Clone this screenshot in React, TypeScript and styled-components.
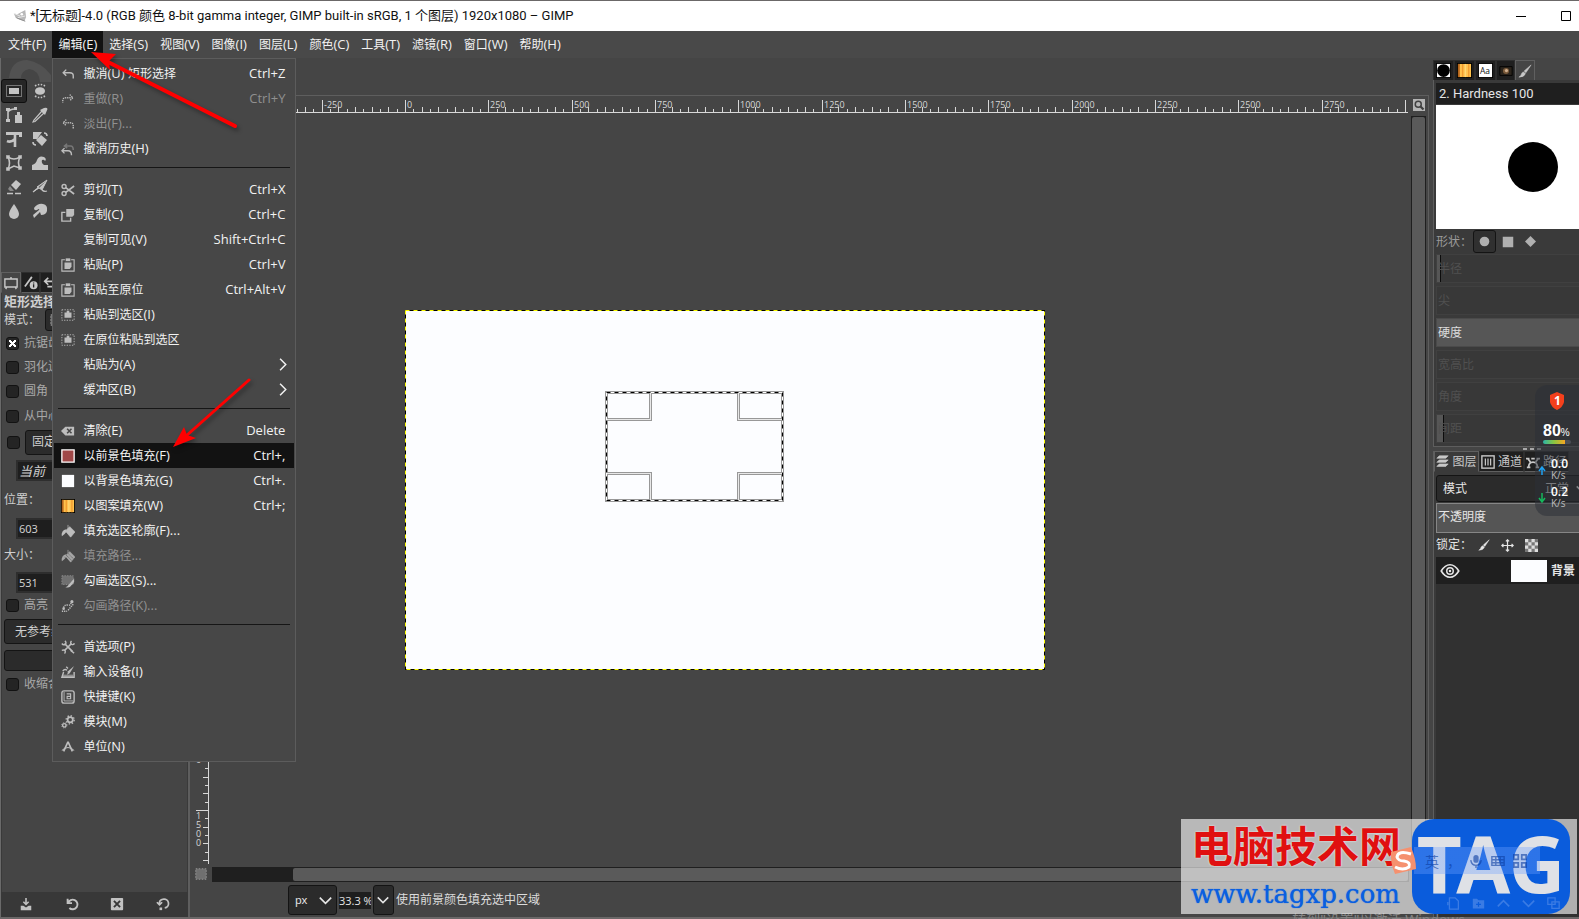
import React from 'react';
import styled, { createGlobalStyle, css } from 'styled-components';

const UI = '"Noto Sans", "Noto Sans CJK SC", sans-serif';

const Global = createGlobalStyle`
  *, *::before, *::after { box-sizing: border-box; }
  body { margin: 0; background: #454545; overflow: hidden; }
  button, input, select { font: inherit; color: inherit; margin: 0; }
  button { cursor: pointer; }
  svg { display: block; flex: none; }
`;

const Shell = styled.div`
  position: relative;
  display: flex;
  flex-direction: column;
  min-height: 100vh;
  overflow: hidden;
  background: #454545;
  color: #e6e6e6;
  font: 12px/16px ${UI};
`;

/* ---------- title and menu bars ---------- */

const TitleBar = styled.header`
  display: flex;
  align-items: center;
  gap: 3px;
  height: 31px;
  padding: 0 0 0 13px;
  border-top: 1px solid #6b6868;
  background: #fff;
  color: #111;
`;
const TitleText = styled.h1`
  flex: 1;
  margin: 0;
  font: 400 13px/16px Roboto, "Noto Sans CJK SC", sans-serif;
  white-space: nowrap;
`;
const WindowButton = styled.button`
  display: grid;
  place-items: center;
  width: 45px;
  height: 29px;
  padding: 0;
  border: 0;
  background: none;
`;
const WindowButtons = styled.div`
  display: flex;
  margin-right: -9px;
`;

const MenuBar = styled.nav`
  display: flex;
  height: 27px;
  padding-left: 2px;
  background: #494949;
`;
const MenuSlot = styled.div`
  position: relative;
`;
const MenuTitle = styled.button<{ $open?: boolean }>`
  height: 27px;
  padding: 0 6px;
  border: 0;
  background: ${(p) => (p.$open ? '#121212' : 'transparent')};
  color: #f2f2f2;
  white-space: nowrap;
`;
const LatinRun = styled.span`
  font-family: "Open Sans", sans-serif;
  font-size: 13px;
`;

const Popup = styled.div`
  position: absolute;
  z-index: 5;
  top: 27px;
  left: 0;
  width: 244px;
  padding: 2px 1px;
  border: 1px solid #5c5c5c;
  background: #474747;
`;
const Row = styled.button<{ $active?: boolean; $off?: boolean }>`
  display: grid;
  grid-template-columns: 14px 1fr auto;
  gap: 8px;
  align-items: center;
  width: 100%;
  height: 25px;
  padding: 0 9px 0 7px;
  border: 0;
  background: ${(p) => (p.$active ? '#121212' : 'transparent')};
  color: ${(p) => (p.$off ? '#909090' : '#f2f2f2')};
  text-align: left;
  white-space: nowrap;
`;
const Shortcut = styled.span`
  padding-bottom: 2px;
  font-family: "Open Sans", sans-serif;
  font-size: 13px;
`;
const SubmenuMark = styled.span`
  margin-right: -4px;
`;
const Separator = styled.hr`
  height: 1px;
  margin: 6px 4px 9px;
  border: 0;
  background: #161616;
`;

/* ---------- main area ---------- */

const Main = styled.main`
  flex: 1;
  display: grid;
  grid-template-columns: 190px minmax(0, 1fr) 148px;
  column-gap: 2px;
  border-bottom: 2px solid #6b6868;
`;
const LeftDock = styled.aside`
  display: flex;
  flex-direction: column;
  min-width: 0;
  border-left: 1px solid #6a6a6a;
  border-right: 2px solid #5e5e5e;
  overflow: hidden;
`;
const Toolbox = styled.div`
  position: relative;
  height: 214px;
  padding-top: 21px;
`;
const Mascot = styled.svg`
  position: absolute;
  top: 0;
  left: 6px;
`;
const ToolGrid = styled.div`
  position: relative;
  display: grid;
  grid-template-columns: repeat(2, 26px);
  grid-auto-rows: 24px;
`;
const Tool = styled.button<{ $on?: boolean }>`
  display: grid;
  place-items: center;
  padding: 0;
  border: 1px solid ${(p) => (p.$on ? '#0f0f0f' : 'transparent')};
  border-radius: 3px;
  background: ${(p) => (p.$on ? '#262626' : 'transparent')};
  color: #c4c4c4;
`;
const TabStrip = styled.div`
  display: flex;
  height: 21px;
`;
const DockTab = styled.button<{ $on?: boolean; $w: number }>`
  display: flex;
  align-items: center;
  justify-content: center;
  gap: 3px;
  flex: none;
  width: ${(p) => p.$w}px;
  padding: 0;
  border: 1px solid ${(p) => (p.$on ? '#606060' : '#2e2e2e')};
  border-bottom-color: ${(p) => (p.$on ? 'transparent' : '#606060')};
  background: ${(p) => (p.$on ? 'transparent' : '#1f1f1f')};
  color: #c8c8c8;
  white-space: nowrap;
`;
const Options = styled.section`
  flex: 1;
  padding-left: 2px;
  border-left: 1px solid #3a3a3a;
  border-right: 1px solid #3a3a3a;
  color: #cfcfcf;
`;
const OptionsTitle = styled.h2`
  margin: 0;
  font-size: 13px;
  line-height: 16px;
`;
const OptionRow = styled.div<{ $h: number; $pad?: number }>`
  display: flex;
  align-items: center;
  gap: 5px;
  height: ${(p) => p.$h}px;
  padding-left: ${(p) => p.$pad ?? 0}px;
  white-space: nowrap;
`;
const CheckLabel = styled.label`
  display: flex;
  align-items: center;
  gap: 5px;
  color: #a8a8a8;
`;
const Check = styled.input`
  appearance: none;
  position: relative;
  flex: none;
  width: 13px;
  height: 13px;
  border: 1px solid #121212;
  border-radius: 3px;
  background: #242424;
  &:checked::after {
    content: '';
    position: absolute;
    inset: 2px;
    background:
      linear-gradient(45deg, transparent 40%, #fff 40%, #fff 60%, transparent 60%),
      linear-gradient(-45deg, transparent 40%, #fff 40%, #fff 60%, transparent 60%);
  }
`;
const fieldLook = css`
  border: 1px solid #141414;
  border-radius: 3px;
  background: #2b2b2b;
`;
const WideButton = styled.button<{ $h: number; $pad?: number }>`
  ${fieldLook}
  flex: 1;
  height: ${(p) => p.$h}px;
  margin-right: 4px;
  padding: 0 ${(p) => p.$pad ?? 10}px;
  text-align: left;
`;
const Field = styled.input<{ $slanted?: boolean }>`
  flex: 1;
  min-width: 0;
  height: 21px;
  padding: 0 1px;
  border: 2px solid #2e2e2e;
  background: #1e1e1e;
  font-size: ${(p) => (p.$slanted ? 13 : 11)}px;
  font-style: ${(p) => (p.$slanted ? 'italic' : 'normal')};
`;
const DockFooter = styled.div`
  display: flex;
  justify-content: space-between;
  align-items: center;
  height: 25px;
  padding: 0 18px 2px;
  background: #383838;
`;
const IconButton = styled.button`
  display: grid;
  place-items: center;
  padding: 0;
  border: 0;
  background: none;
  color: #c2c2c2;
`;

/* ---------- image window ---------- */

const ImageWindow = styled.section`
  display: grid;
  grid-template-columns: 18px minmax(0, 1fr) 20px;
  grid-template-rows: 37px 18px minmax(0, 1fr) 18px 34px;
`;
const Blank = styled.div`
  grid-column: 1 / -1;
`;
const Cell = styled.div<{ $top?: boolean; $right?: boolean }>`
  position: relative;
  overflow: hidden;
  display: grid;
  place-items: center;
  border-top: ${(p) => (p.$top ? '1px solid #5e5e5e' : '0')};
  border-right: ${(p) => (p.$right ? '1px solid #5e5e5e' : '0')};
`;
const RulerArt = styled.svg`
  position: absolute;
  inset: 0;
  width: 100%;
  height: 100%;
  font: 9px "Open Sans", sans-serif;
  fill: #d8d8d8;
`;
const Picture = styled.svg`
  position: absolute;
  left: 195px;
  top: 197px;
`;
const ScrollTrack = styled.div<{ $vertical?: boolean }>`
  display: flex;
  justify-self: ${(p) => (p.$vertical ? 'center' : 'stretch')};
  align-self: stretch;
  width: ${(p) => (p.$vertical ? '15px' : 'auto')};
  padding: ${(p) => (p.$vertical ? '0' : '0 0 0 80px')};
  margin: ${(p) => (p.$vertical ? '3px 0 0' : '2px 0 1px 2px')};
  background: #1f1f1f;
`;
const ScrollThumb = styled.div`
  flex: 1;
  margin: 1px;
  border-radius: 2px;
  background: #5a5a5a;
`;
const StatusBar = styled.footer`
  grid-column: 1 / -1;
  display: flex;
  align-items: center;
  gap: 2px;
  padding-left: 96px;
`;
const UnitBox = styled.label<{ $w: number }>`
  position: relative;
  display: flex;
  align-items: center;
  width: ${(p) => p.$w}px;
  height: 30px;
  ${fieldLook}
  svg { position: absolute; right: 4px; pointer-events: none; }
`;
const UnitSelect = styled.select`
  appearance: none;
  width: 100%;
  height: 100%;
  padding: 0 6px;
  border: 0;
  background: none;
  font-size: 11px;
`;
const ZoomField = styled.input`
  width: 32px;
  height: 17px;
  padding: 0;
  border: 0;
  background: #1e1e1e;
  font-family: "Open Sans", sans-serif;
  font-size: 11px;
`;
const StatusText = styled.span`
  color: #dcdcdc;
`;

/* ---------- right dock ---------- */

const RightDock = styled.aside`
  display: flex;
  flex-direction: column;
  min-width: 0;
  overflow: hidden;
  padding-left: 2px;
`;
const BrushPanel = styled.section`
  margin-top: -1px;
  padding: 3px 0 0 2px;
  border-left: 1px solid #5e5e5e;
  border-bottom: 1px solid #5e5e5e;
  background: #3a3a3a;
`;
const BrushTabs = styled(TabStrip)`
  margin-top: 2px;
`;
const BrushName = styled.input`
  width: 100%;
  height: 21px;
  padding: 0 3px;
  border: 0;
  background: #1f1f1f;
  display: block;
  font: 13px Roboto, sans-serif;
`;
const BrushPreview = styled.div`
  display: flex;
  justify-content: flex-end;
  align-items: center;
  height: 124px;
  margin-top: 1px;
  padding-right: 21px;
  background: #fff;
`;
const BrushDot = styled.div`
  width: 50px;
  height: 50px;
  border-radius: 50%;
  background: #000;
`;
const ShapeRow = styled.div`
  display: flex;
  align-items: center;
  height: 25px;
  color: #9a9a9a;
`;
const ShapeLabel = styled.span`
  width: 37px;
  white-space: nowrap;
`;
const ShapeButton = styled.button<{ $on?: boolean }>`
  display: grid;
  place-items: center;
  width: 23px;
  height: 23px;
  padding: 0;
  border: 1px solid ${(p) => (p.$on ? '#141414' : 'transparent')};
  border-radius: 3px;
  background: ${(p) => (p.$on ? '#303030' : 'transparent')};
  color: #b0b0b0;
`;
const Slider = styled.div<{ $lit?: boolean; $fill?: number }>`
  display: flex;
  align-items: center;
  height: 29px;
  margin-bottom: 3px;
  padding-left: 1px;
  border: 1px solid ${(p) => (p.$lit ? '#4a4a4a' : '#404040')};
  border-right: 0;
  background: ${(p) => (p.$lit ? '#565656' : '#383838')};
  ${(p) =>
    p.$fill &&
    css`
      background: linear-gradient(90deg, #565656 0 ${p.$fill}px, #0c0c0c ${p.$fill}px ${p.$fill! + 1}px, #383838 ${p.$fill! + 1}px);
    `}
  color: ${(p) => (p.$lit ? '#dcdcdc' : '#505050')};
`;
const Grip = styled.div`
  display: flex;
  justify-content: center;
  gap: 3px;
  height: 4px;
  padding: 1px 0 0 52px;
  i { width: 4px; height: 2px; background: #a8a8a8; }
`;
const LayersPanel = styled.section`
  flex: 1;
  display: flex;
  flex-direction: column;
  border-left: 1px solid #5e5e5e;
  background: #3a3a3a;
`;
const ModeBox = styled.label`
  ${fieldLook}
  display: flex;
  align-items: center;
  height: 27px;
  margin: 3px -10px 1px 2px;
  padding: 0 0 0 6px;
  svg { margin-left: 5px; }
`;
const ModeSelect = styled.select`
  appearance: none;
  width: 26px;
  margin-left: auto;
  padding: 0;
  border: 0;
  background: none;
  color: #c8c8c8;
`;
const Opacity = styled.div`
  height: 30px;
  margin: 0 -2px 0 2px;
  padding: 5px 1px 4px;
  border: 1px solid #868686;
  background: #555;
`;
const LockRow = styled.div`
  display: flex;
  align-items: center;
  gap: 11px;
  height: 24px;
  padding-left: 2px;
`;
const LockLabel = styled.span`
  width: 31px;
  white-space: nowrap;
`;
const LayerList = styled.div`
  flex: 1;
  margin-left: 2px;
  background: #313131;
`;
const LayerRow = styled.div`
  display: flex;
  align-items: center;
  height: 27px;
  padding-left: 4px;
  background: #1f1f1f;
  font-weight: 700;
  white-space: nowrap;
`;
const LayerThumb = styled.div`
  width: 36px;
  height: 22px;
  margin: 0 4px 0 51px;
  background: #fcfdff;
`;

/* ---------- overlays ---------- */

const Arrows = styled.svg`
  position: absolute;
  z-index: 6;
  left: 0;
  top: 0;
  pointer-events: none;
  filter: drop-shadow(2px 3px 2px rgba(0, 0, 0, 0.35));
`;
const Monitor = styled.div`
  position: absolute;
  z-index: 4;
  right: 0;
  top: 385px;
  width: 44px;
  height: 131px;
  padding-top: 7px;
  border-radius: 12px 0 0 12px;
  background: rgba(44, 48, 56, 0.52);
  color: #fff;
`;
const Percent = styled.div`
  display: flex;
  align-items: baseline;
  margin: 14px 0 0 8px;
  font: 700 16px/14px "Liberation Sans", sans-serif;
  small { font-size: 10px; font-weight: 400; }
`;
const Meter = styled.div`
  width: 28px;
  height: 4px;
  margin: 0 0 0 8px;
  border-radius: 2px;
  background: linear-gradient(90deg, #2bb5a8, #8cc63f 40%, #f5a623 78%, #4c4f57 78%);
`;
const RateGroup = styled.div`
  padding-top: 14px;
`;
const Rate = styled.div`
  display: flex;
  gap: 5px;
  height: 28px;
  margin-left: 3px;
`;
const RateText = styled.div`
  font: 600 12px/12px "Open Sans", sans-serif;
  small {
    display: block;
    font-size: 10px;
    font-weight: 400;
    line-height: 10px;
    color: #bcbcbc;
  }
`;

const ActivateNote = styled.div`
  position: absolute;
  right: 100px;
  bottom: -10px;
  z-index: 7;
  color: #858585;
  font-size: 14px;
  line-height: 19px;
  white-space: nowrap;
`;
const Watermark = styled.div`
  position: absolute;
  z-index: 8;
  right: 2px;
  bottom: 5px;
  display: flex;
  width: 396px;
  height: 95px;
  padding-right: 7px;
  background: rgba(255, 255, 255, 0.62);
`;
const SiteWords = styled.div`
  flex: 1;
  padding-left: 10px;
  white-space: nowrap;
`;
const SiteName = styled.div`
  height: 58px;
  color: #e01010;
  font: 700 42px/50px "Noto Sans CJK SC", sans-serif;
  text-shadow: 0 0 2px #fff;
`;
const SiteUrl = styled.div`
  color: #0a5fe0;
  font: 26px/34px "DejaVu Serif", serif;
  text-shadow: 0 0 1px #0a5fe0;
`;
const Badge = styled.div`
  position: relative;
  width: 158px;
  height: 95px;
  border-radius: 22px;
  background: #0a5cdc;
  color: #dfe1e6;
  font: 700 78px/88px "Noto Sans", sans-serif;
  text-align: center;
`;
const GhostIcons = styled.div`
  position: absolute;
  right: 10px;
  bottom: 4px;
  display: flex;
  gap: 12px;
  color: rgba(130, 170, 240, 0.4);
`;
const ImeBar = styled.div`
  position: absolute;
  right: 37px;
  top: 28px;
  display: flex;
  align-items: center;
  gap: 8px;
  width: 150px;
  height: 27px;
  color: rgba(10, 60, 160, 0.6);
  font: 14px/20px "Noto Sans CJK SC", sans-serif;
  background: linear-gradient(90deg, transparent 24px, rgba(110, 160, 255, 0.35) 24px);
`;

/* ---------- icons (16 unit grid) ---------- */

const L = { fill: 'none', stroke: 'currentColor', strokeWidth: 1.6 } as const;
const undoPath = <path d="M6 3 L2.5 6.5 L6 10 M2.5 6.5 H10 Q14 6.5 14 10 V13" {...L} />;
const bucket = <><path d="M5 8 L10 3 L16 9 L11 15 Z M8 1 V7" fill="currentColor" stroke="currentColor" strokeWidth=".8" /><path d="M6 6 Q0 7 1 14 Q4 12 6 9Z" fill="currentColor" /></>;
const brush = <path d="M15 1 L7 8 L9 10 Z M6.5 9 L8.5 11 Q7 15 1 15 Q4 13 4 11 Q5 9 6.5 9Z" fill="currentColor" stroke="currentColor" strokeWidth=".6" />;
const paste = <><path d="M1 2 H15 V15 H1Z" fill="none" stroke="currentColor" strokeWidth="1.3" /><path d="M5 0 H11 V4 H5Z" fill="currentColor" stroke="#474747" strokeWidth=".8" /><path d="M4 5 H12 V10 L10 12.500 H4Z" fill="currentColor" /></>;
const pasteSel = <><path d="M1 2 H15 V14 H1Z" fill="none" stroke="currentColor" strokeDasharray="1.500 1.500" /><path d="M4 5 H6.500 V3 H9.500 V5 H12 V11 H4Z" fill="currentColor" /></>;
const wood = (
  <>
    <path d="M0 0H16V16H0Z" fill="#000" /><path d="M1 1H15V15H1Z" fill="#ffc24d" />
    <path d="M2 1V15" stroke="#b5651d" strokeWidth="2" /><path d="M6 1V15M12.500 1V15" stroke="#f09a30" strokeWidth="1.500" /><path d="M9 1V15" stroke="#ffd777" strokeWidth="1.500" />
  </>
);
const reset = <path d="M3 2 V7 H8 M3.500 7 A5.500 5.500 0 1 1 5 12.500" fill="none" stroke="currentColor" strokeWidth="2.200" />;

const icons: Record<string, React.ReactNode> = {
  undo: undoPath,
  redo: <g strokeDasharray="1.5 1"><path d="M10 3 L13.500 6.500 L10 10 M13.500 6.500 H6 Q2 6.500 2 10 V12" {...L} /></g>,
  fade: <g strokeDasharray="1.5 1">{undoPath}</g>,
  history: <><path d="M7 2 L4 4.500 L7 7 M4 4.500 H11 Q14 4.500 14 9" fill="none" stroke="#777" strokeWidth="1.800" /><path d="M4 7 L1 10 L4 13 M1 10 H8 Q12 10 12 15" {...L} /></>,
  cut: <><circle cx="3.500" cy="4" r="2.300" {...L} /><circle cx="3.500" cy="12" r="2.300" {...L} /><path d="M5 5 L15 12.500 M5 11 L15 3.500" {...L} strokeWidth="2" /></>,
  copy: <><path d="M6 1 H15 V8 L13 10 H6Z" fill="currentColor" /><path d="M5 5 H1 V15 H11 V11" {...L} /></>,
  paste, pasteSel,
  clear: <><path d="M5 3 H15 V13 H5 L0 8Z" fill="currentColor" /><path d="M7 5.500 L12 10.500 M12 5.500 L7 10.500" stroke="#474747" strokeWidth="1.800" /></>,
  fg: <path d="M1 1H15V15H1Z" fill="#a04848" stroke="#fff" strokeWidth="1.500" />,
  bg: <path d="M1 1H15V15H1Z" fill="#fcfdff" />,
  wood,
  fill: bucket,
  fillPath: <g opacity=".8">{bucket}<path d="M6 7l6 6M8 5l6 6M4 9l6 6" stroke="#474747" strokeDasharray="1 1" /></g>,
  strokeSel: <><path d="M1 2H14V12H1Z" fill="#707070" stroke="#8e8e8e" strokeDasharray="1.500 1.500" /><path d="M15 5 L9 12 L11 14 L15 9Z M9 12 Q7 15 5 15 Q10 16 11 14" fill="currentColor" /></>,
  strokePath: <><path d="M3 10 Q4 6 8 7 Q11 8 12 3" {...L} strokeDasharray="1.500 1" /><circle cx="3" cy="11" r="1.500" fill="currentColor" /><circle cx="12.500" cy="3" r="1.800" fill="currentColor" /><path d="M14 6 L8 13 M1 14 H7" {...L} strokeDasharray="1.500 1" /></>,
  prefs: <><path d="M4 4 L13 13 M12 4 L4 12" {...L} strokeWidth="2" /><path d="M1 4 A3 3 0 0 0 5 5 A3 3 0 0 0 4.500 1 M12 1 A3 3 0 0 0 12 5 A3 3 0 0 0 15.500 4 M1 12 A3 3 0 0 1 4.500 12 A3 3 0 0 1 4 15.500 M11 12 L15 15" {...L} /></>,
  input: <><path d="M3 8 L1 14 H15 V8" {...L} /><path d="M2 11H14V14H2Z" fill="currentColor" opacity=".6" /><path d="M15 1 L8 7 L7 11 L10 9.500Z" fill="currentColor" /><path d="M2 7 Q4 4 7 6 M6 2l2 2" {...L} /></>,
  keys: <><rect x="1" y="1" width="14" height="14" rx="2.500" {...L} /><path d="M3.500 2V12.500H14" stroke="currentColor" fill="none" /><path d="M6.500 4.500 H11 V10 H7 V7.300 H11" {...L} strokeWidth="1.300" /></>,
  modules: <><circle cx="10.500" cy="5.500" r="3" {...L} strokeWidth="2" /><circle cx="10.500" cy="5.500" r="4.600" {...L} strokeDasharray="1.600 2" /><circle cx="3.800" cy="11.800" r="2" {...L} /><circle cx="3.800" cy="11.800" r="3" {...L} strokeWidth="1" strokeDasharray="1.200 1.200" /></>,
  units: <><path d="M8 2 L3 13 M8 2 L13 13" {...L} strokeWidth="2" /><path d="M1 12 Q8 5 15 12" {...L} strokeWidth="1.200" /></>,
  brush,
  // toolbox
  rect: <><path d="M.5 2.500H15.500V13.500H.5Z" fill="none" stroke="currentColor" strokeDasharray="1 1" /><path d="M3 5H13V11H3Z" fill="currentColor" /></>,
  ellipse: <><ellipse cx="8" cy="8" rx="5" ry="3.800" fill="currentColor" /><path d="M3 3Q8 0 13 3M3 13Q8 16 13 13" {...L} strokeDasharray="1.500 1.500" /></>,
  pathTool: <><path d="M2 1V15M2 5Q4 2 9 2" {...L} /><path d="M0 1H4V4H0ZM0 12H4V15H0ZM8 0H11V3H8ZM9 8H16V16H9ZM11 5H14V8H11Z" fill="currentColor" /></>,
  picker: <><path d="M10 4 L2 13 L1 15 L3 14.500 L12 6Z" fill="none" stroke="currentColor" strokeWidth="1.200" /><path d="M8 3 L12 1 Q15 0 15.500 2 L13 8Z" fill="currentColor" /></>,
  crop: <><path d="M0 1H16V6H13V4H0Z" fill="currentColor" /><path d="M9 1V16M9 8Q5 12 1 10" {...L} strokeWidth="2.600" /></>,
  transform: <><path d="M1 1H10L5 8H1Z M9 4 L15 9 L10 15 L4 9Z" fill="currentColor" /><path d="M12 2Q15 2 15 5M1 11Q1 14 4 14" {...L} /></>,
  warpCage: <path d="M2 2 Q8 6 14 2 Q11 8 14 13 L8 11 L2 14 Q5 8 2 2Z M1 1h2v2H1ZM13 1h2v2h-2ZM13 12h2v2h-2ZM1 13h2v2H1Z" {...L} />,
  warp: <path d="M0 15V10Q4 9 5 5Q7 0 12 2Q15 4 13 6Q12 4 10 5Q9 8 12 10H16V15Z" fill="currentColor" />,
  eraser: <><path d="M10 1 L15 5 L10 11 L5 6Z" fill="currentColor" /><path d="M4 7L8 12H4L2 10Z" fill="#888" /><path d="M1 14.500H7M9 14.500H15" {...L} /></>,
  ink: <><path d="M15 1L5 8L7 9L2 12M15 1L10 11L7 9" fill="currentColor" stroke="currentColor" /><path d="M1 13L6 9M10 11Q12 13 15 12" {...L} strokeWidth="1.200" /></>,
  blur: <path d="M8 1Q13 8 13 11A5 5 0 0 1 3 11Q3 8 8 1Z" fill="currentColor" />,
  smudge: <path d="M2 5Q6 0 11 1Q16 2 15 8Q14 12 9 12L8 9L2 15L1 12L7 7Q8 5 5 7Q2 8 2 5Z" fill="currentColor" />,
  easel: <path d="M1 3.500H15V12.500H1Z M8 1V3M3 12.500L2 15M13 12.500L14 15" {...L} />,
  device: <><path d="M1 12L9 1" {...L} strokeWidth="2" /><circle cx="11" cy="10.500" r="4.500" fill="currentColor" /><path d="M11 9.500V13M11 7.500V8.500" stroke="#222" strokeWidth="1.500" /></>,
  arrows: <path d="M6 2L2 6L6 10M2 6H14V9M14 9V12H5" {...L} strokeWidth="2" />,
  save: <><path d="M8 1V8M5 5.500L8 8.500L11 5.500" {...L} strokeWidth="1.800" /><path d="M2 10H5L8 12L11 10H14V15H2Z" fill="currentColor" /></>,
  restore: reset,
  del: <><rect x="1" y="1" width="14" height="14" rx="1" fill="currentColor" /><path d="M4.500 4.500L11.500 11.500M11.500 4.500L4.500 11.500" stroke="#383838" strokeWidth="2.200" /></>,
  resetAll: <><path d="M1 6L4 9L7 6M4 9Q3 3 8.500 2.500A5 5 0 0 1 10 12.500" {...L} strokeWidth="2" /><path d="M4 12h3v3H4Z" fill="currentColor" /></>,
  // right dock
  brushTip: <><path d="M0 0H16V16H0Z" fill="#000" /><path d="M1 1H15V15H1Z" fill="#fff" /><circle cx="8" cy="8" r="6.800" fill="#000" /></>,
  fonts: <><path d="M0 0H16V16H0Z" fill="#000" /><path d="M1 1H15V15H1Z" fill="#fff" /><text x="2" y="12" fontSize="9" fill="#111" fontFamily="Open Sans">Aa</text></>,
  blob: <><path d="M1 3H15V13H1Z" fill="#2b241c" stroke="#000" /><circle cx="8" cy="8" r="3.500" fill="#7a5a3a" /><circle cx="8.500" cy="7.500" r="1.800" fill="#d0b090" /></>,
  layers: <path d="M4 1H15L12 4H1ZM4 6H15L12 9H1ZM4 11H15L12 14H1Z" fill="currentColor" stroke="currentColor" strokeWidth=".8" />,
  channels: <><rect x="1" y="1" width="14" height="14" {...L} /><path d="M5 4V12M8 4V12M11 4V12" stroke="currentColor" strokeWidth="1.400" /></>,
  paths: <path d="M0 4H4M6 4H10M12 4H16M3 14Q3 8 8 8Q13 8 13 14M2 4L5 8M14 4L11 8M1 14H5M11 14H15" {...L} strokeWidth="2" />,
  move: <path d="M8 1V15M1 8H15M6 3L8 1L10 3M6 13L8 15L10 13M3 6L1 8L3 10M13 6L15 8L13 10" {...L} strokeWidth="1.500" />,
  checker: <><path d="M0 0H16V16H0Z" fill="#777" /><path d="M0 0h4v4H0ZM8 0h4v4H8ZM4 4h4v4H4ZM12 4h4v4h-4ZM0 8h4v4H0ZM8 8h4v4H8ZM4 12h4v4H4ZM12 12h4v4h-4Z" fill="#ddd" /></>,
  eye: <><path d="M1 8Q4 3 8 3Q12 3 15 8Q12 13 8 13Q4 13 1 8Z" {...L} strokeWidth="1.300" /><circle cx="8" cy="8" r="2.600" {...L} strokeWidth="1.200" /><circle cx="8" cy="8" r="1" fill="currentColor" /></>,
  circle: <circle cx="8" cy="8" r="7" fill="currentColor" />,
  square: <path d="M1 1H15V15H1Z" fill="currentColor" />,
  diamond: <path d="M8 0L16 8L8 16L0 8Z" fill="currentColor" />,
  chevron: <path d="M1 4.500L8 11.500L15 4.500" {...L} strokeWidth="2" />,
  up: <path d="M1 11.500L8 4.500L15 11.500" {...L} strokeWidth="2" />,
  sub: <path d="M5 1L12 8L5 15" {...L} strokeWidth="1.800" />,
  zoom: <><path d="M0 0H16V16H0Z" fill="#b4b4b4" /><circle cx="7" cy="7" r="4" fill="none" stroke="#404040" strokeWidth="2" /><path d="M10 10L14 14" stroke="#404040" strokeWidth="3" /></>,
  quickmask: <path d="M1 1H15V15H1Z" fill="#707070" stroke="#a8a8a8" strokeDasharray="2 2" />,
  page: <path d="M3 1H10L14 5V15H3ZM1 6V10" {...L} />,
  folder: <><path d="M1 2H6L8 4H15V14H1Z" fill="currentColor" /><path d="M8 6V12M5 9H11" stroke="#0a5cdc" strokeWidth="1.500" /></>,
  duplicate: <path d="M1 1H10V9H1ZM6 6H15V14H6Z" {...L} />,
  mic: <><rect x="5" y="1" width="6" height="9" rx="3" fill="currentColor" /><path d="M2 7Q3 13 8 13Q13 13 14 7M8 13V16" {...L} /></>,
  keyboard: <path d="M1 3H15V13H1ZM1 6.500H15M1 10H15M5.500 3V13M10.500 3V13" {...L} />,
  grid: <path d="M1 1H6V6H1ZM10 1H15V6H10ZM1 10H6V15H1ZM10 10H15V15H10Z" {...L} strokeWidth="2" />,
};

const Icon = ({ name, size = 14 }: { name: string; size?: number }) => (
  <svg width={size} height={size} viewBox="0 0 16 16" aria-hidden="true">{icons[name]}</svg>
);
const MenuIcon = styled.span`
  display: block;
  width: 14px;
  height: 14px;
  color: #bdbdbd;
`;

// Access keys and punctuation are set one size larger than the Chinese words.
const Mixed = ({ text }: { text: string }) => (
  <>
    {text.split(/([\x20-\x7e]+)/).map((part, i) => (i % 2 ? <LatinRun key={i}>{part}</LatinRun> : part))}
  </>
);

/* ---------- data ---------- */

type Entry = { icon?: string; label: string; keys?: string; off?: boolean; active?: boolean; sub?: boolean };
const groups: Entry[][] = [
  [
    { icon: 'undo', label: '撤消(U) 矩形选择', keys: 'Ctrl+Z' },
    { icon: 'redo', label: '重做(R)', keys: 'Ctrl+Y', off: true },
    { icon: 'fade', label: '淡出(F)...', off: true },
    { icon: 'history', label: '撤消历史(H)' },
  ],
  [
    { icon: 'cut', label: '剪切(T)', keys: 'Ctrl+X' },
    { icon: 'copy', label: '复制(C)', keys: 'Ctrl+C' },
    { label: '复制可见(V)', keys: 'Shift+Ctrl+C' },
    { icon: 'paste', label: '粘贴(P)', keys: 'Ctrl+V' },
    { icon: 'paste', label: '粘贴至原位', keys: 'Ctrl+Alt+V' },
    { icon: 'pasteSel', label: '粘贴到选区(I)' },
    { icon: 'pasteSel', label: '在原位粘贴到选区' },
    { label: '粘贴为(A)', sub: true },
    { label: '缓冲区(B)', sub: true },
  ],
  [
    { icon: 'clear', label: '清除(E)', keys: 'Delete' },
    { icon: 'fg', label: '以前景色填充(F)', keys: 'Ctrl+,', active: true },
    { icon: 'bg', label: '以背景色填充(G)', keys: 'Ctrl+.' },
    { icon: 'wood', label: '以图案填充(W)', keys: 'Ctrl+;' },
    { icon: 'fill', label: '填充选区轮廓(F)...' },
    { icon: 'fillPath', label: '填充路径...', off: true },
    { icon: 'strokeSel', label: '勾画选区(S)...' },
    { icon: 'strokePath', label: '勾画路径(K)...', off: true },
  ],
  [
    { icon: 'prefs', label: '首选项(P)' },
    { icon: 'input', label: '输入设备(I)' },
    { icon: 'keys', label: '快捷键(K)' },
    { icon: 'modules', label: '模块(M)' },
    { icon: 'units', label: '单位(N)' },
  ],
];
const menus = ['文件(F)', '编辑(E)', '选择(S)', '视图(V)', '图像(I)', '图层(L)', '颜色(C)', '工具(T)', '滤镜(R)', '窗口(W)', '帮助(H)'];
const tools = ['rect', 'ellipse', 'pathTool', 'picker', 'crop', 'transform', 'warpCage', 'warp', 'eraser', 'ink', 'blur', 'smudge'];

const STEP = 25 / 3;
const ticks = Array.from({ length: 148 }, (_, i) => i - 27);

const HorizontalRuler = () => (
  <RulerArt>
    {ticks.map((t) => {
      const x = Math.round(195 + t * STEP);
      const major = t % 10 === 0;
      const h = major ? 12 : t % 2 === 0 ? 5 : 3;
      if (x > 1198) return null;
      return (
        <g key={t}>
          <rect x={x} y={16 - h} width="1" height={h} />
          {major && t < 120 && <text x={x + 2} y="12">{t * 25}</text>}
        </g>
      );
    })}
    <rect x="0" y="16" width="1198" height="1" />
  </RulerArt>
);

const VerticalRuler = () => (
  <RulerArt>
    {ticks.map((t) => {
      const y = Math.round(197 + t * STEP);
      const major = t % 10 === 0;
      const w = major ? 12 : t % 2 === 0 ? 5 : 3;
      if (y < 0 || y > 749) return null;
      return (
        <g key={t}>
          <rect x={16 - w} y={y} width={w} height="1" />
          {major && String(t * 25).split('').map((c, i) => <text key={i} x="4" y={y + 9 + i * 9}>{c}</text>)}
        </g>
      );
    })}
    <rect x="16" y="0" width="1" height="751" />
  </RulerArt>
);

const handle = (x: number, y: number) => (
  <g key={`${x}-${y}`}>
    <rect x={x} y={y} width="46" height="29" fill="#e8e8e8" stroke="#989898" />
    <rect x={x + 2} y={y + 2} width="42" height="25" fill="#fcfdff" stroke="#989898" />
  </g>
);

const EditedPicture = () => (
  <Picture width="640" height="360">
    <rect x=".5" y=".5" width="639" height="359" fill="#fcfdff" stroke="#000" />
    <rect x=".5" y=".5" width="639" height="359" fill="none" stroke="#ff0" strokeDasharray="4 4" />
    <rect x="200.5" y="81.5" width="178" height="110" fill="none" stroke="#989898" />
    <rect x="202.5" y="83.5" width="174" height="106" fill="none" stroke="#989898" />
    {handle(200.5, 81.5)}
    {handle(332.5, 81.5)}
    {handle(200.5, 162.5)}
    {handle(332.5, 162.5)}
    <rect x="201.5" y="82.5" width="176" height="108" fill="none" stroke="#fff" />
    <rect x="201.5" y="82.5" width="176" height="108" fill="none" stroke="#000" strokeDasharray="4 4" />
  </Picture>
);

const OptionCheck = ({ label, h, on }: { label: string; h: number; on?: boolean }) => (
  <OptionRow $h={h} $pad={2}>
    <CheckLabel><Check type="checkbox" defaultChecked={on} />{label}</CheckLabel>
  </OptionRow>
);

export default function App() {
  return (
    <Shell>
      <Global />
      <TitleBar>
        <svg width="14" height="14" viewBox="0 0 16 16">
          <path d="M1 5L5 6L14 1L15 9L13 14L7 12L3 10Z" fill="#b8b8b8" />
          <path d="M1 5L8 8M5 10L14 8" stroke="#eee" /><circle cx="10" cy="6" r="1.500" fill="#fff" /><path d="M4 10L14 14" stroke="#888" />
        </svg>
        <TitleText>*[无标题]-4.0 (RGB 颜色 8-bit gamma integer, GIMP built-in sRGB, 1 个图层) 1920x1080 – GIMP</TitleText>
        <WindowButtons>
          <WindowButton aria-label="最小化"><svg width="10" height="10"><path d="M0 5.500H10" stroke="#000" /></svg></WindowButton>
          <WindowButton aria-label="最大化"><svg width="10" height="10"><path d="M.5 .5H9.500V9.500H.5Z" fill="none" stroke="#000" /></svg></WindowButton>
        </WindowButtons>
      </TitleBar>

      <MenuBar>
        {menus.map((m, i) => (
          <MenuSlot key={m}>
            <MenuTitle $open={i === 1}><Mixed text={m} /></MenuTitle>
            {i === 1 && (
              <Popup role="menu">
                {groups.map((g, gi) => (
                  <React.Fragment key={gi}>
                    {gi > 0 && <Separator />}
                    {g.map((e) => (
                      <Row key={e.label} role="menuitem" $active={e.active} $off={e.off}>
                        <MenuIcon>{e.icon && <Icon name={e.icon} />}</MenuIcon>
                        <span><Mixed text={e.label} /></span>
                        {e.sub ? <SubmenuMark><Icon name="sub" size={13} /></SubmenuMark> : <Shortcut>{e.keys}</Shortcut>}
                      </Row>
                    ))}
                  </React.Fragment>
                ))}
              </Popup>
            )}
          </MenuSlot>
        ))}
      </MenuBar>

      <Main>
        <LeftDock>
          <Toolbox>
            <Mascot width="60" height="24" viewBox="0 0 60 24">
              <path d="M2 20Q4 2 20 2Q34 4 44 17V24H33Q32 12 22 11Q14 13 14 20Z" fill="#525252" />
            </Mascot>
            <ToolGrid>
              {tools.map((t, i) => <Tool key={t} $on={i === 0} aria-label={t}><Icon name={t} size={16} /></Tool>)}
            </ToolGrid>
          </Toolbox>
          <TabStrip>
            <DockTab $w={20} $on aria-label="工具选项"><Icon name="easel" /></DockTab>
            <DockTab $w={19} aria-label="设备状态"><Icon name="device" /></DockTab>
            <DockTab $w={19} aria-label="撤消历史"><Icon name="arrows" /></DockTab>
          </TabStrip>
          <Options>
            <OptionsTitle>矩形选择</OptionsTitle>
            <OptionRow $h={22}>模式：<WideButton $h={22} $pad={4} aria-label="替换"><Icon name="quickmask" size={12} /></WideButton></OptionRow>
            <OptionCheck label="抗锯齿" h={24} on />
            <OptionCheck label="羽化边缘" h={24} />
            <OptionCheck label="圆角" h={24} />
            <OptionCheck label="从中心扩展" h={26} />
            <OptionRow $h={26} $pad={3}><Check type="checkbox" aria-label="固定" /><WideButton $h={25} $pad={6}>固定</WideButton></OptionRow>
            <OptionRow $h={30} $pad={12}><Field $slanted defaultValue="当前" aria-label="比例" /></OptionRow>
            <OptionRow $h={30}><label htmlFor="pos">位置：</label></OptionRow>
            <OptionRow $h={26} $pad={12}><Field id="pos" defaultValue="603" /></OptionRow>
            <OptionRow $h={28}><label htmlFor="size">大小：</label></OptionRow>
            <OptionRow $h={26} $pad={12}><Field id="size" defaultValue="531" /></OptionRow>
            <OptionCheck label="高亮" h={20} />
            <OptionRow $h={33}><WideButton $h={25}>无参考线</WideButton></OptionRow>
            <OptionRow $h={25}><WideButton $h={21} aria-label="自动收缩" /></OptionRow>
            <OptionCheck label="收缩合并" h={22} />
          </Options>
          <DockFooter>
            <IconButton aria-label="保存"><Icon name="save" /></IconButton>
            <IconButton aria-label="恢复"><Icon name="restore" /></IconButton>
            <IconButton aria-label="删除"><Icon name="del" /></IconButton>
            <IconButton aria-label="重置"><Icon name="resetAll" /></IconButton>
          </DockFooter>
        </LeftDock>

        <ImageWindow>
          <Blank />
          <Cell $top />
          <Cell $top><HorizontalRuler /></Cell>
          <Cell $top $right><IconButton aria-label="缩放"><Icon name="zoom" size={12} /></IconButton></Cell>
          <Cell><VerticalRuler /></Cell>
          <Cell><EditedPicture /></Cell>
          <Cell $right><ScrollTrack $vertical><ScrollThumb /></ScrollTrack></Cell>
          <Cell><IconButton aria-label="快速蒙版"><Icon name="quickmask" size={12} /></IconButton></Cell>
          <Cell><ScrollTrack><ScrollThumb /></ScrollTrack></Cell>
          <Cell $right />
          <StatusBar>
            <UnitBox $w={49}><UnitSelect aria-label="单位"><option>px</option></UnitSelect><Icon name="chevron" size={13} /></UnitBox>
            <ZoomField aria-label="缩放比例" defaultValue="33.3 %" />
            <UnitBox as="button" $w={21} aria-label="选择缩放"><Icon name="chevron" size={12} /></UnitBox>
            <StatusText>使用前景颜色填充选中区域</StatusText>
          </StatusBar>
        </ImageWindow>

        <RightDock>
          <BrushTabs>
            <DockTab $w={21} aria-label="画笔"><Icon name="brushTip" size={15} /></DockTab>
            <DockTab $w={21} aria-label="图案"><Icon name="wood" size={15} /></DockTab>
            <DockTab $w={21} aria-label="字体"><Icon name="fonts" size={15} /></DockTab>
            <DockTab $w={19} aria-label="历史"><Icon name="blob" size={14} /></DockTab>
            <DockTab $w={20} $on aria-label="画笔编辑器"><Icon name="brush" /></DockTab>
          </BrushTabs>
          <BrushPanel>
            <BrushName defaultValue="2. Hardness 100" aria-label="名称" />
            <BrushPreview><BrushDot /></BrushPreview>
            <ShapeRow>
              <ShapeLabel>形状：</ShapeLabel>
              <ShapeButton $on aria-label="圆形"><Icon name="circle" size={11} /></ShapeButton>
              <ShapeButton aria-label="方形"><Icon name="square" size={12} /></ShapeButton>
              <ShapeButton aria-label="菱形"><Icon name="diamond" size={11} /></ShapeButton>
            </ShapeRow>
            <Slider $fill={3}>半径</Slider>
            <Slider>尖</Slider>
            <Slider $lit>硬度</Slider>
            <Slider>宽高比</Slider>
            <Slider>角度</Slider>
            <Slider $fill={6}>间距</Slider>
          </BrushPanel>
          <Grip><i /><i /><i /></Grip>
          <LayersPanel>
            <TabStrip>
              <DockTab $w={45} $on><Icon name="layers" size={13} />图层</DockTab>
              <DockTab $w={45}><Icon name="channels" size={14} />通道</DockTab>
              <DockTab $w={45}><Icon name="paths" size={14} />路径</DockTab>
            </TabStrip>
            <ModeBox>模式<ModeSelect><option>正常</option></ModeSelect><Icon name="chevron" size={12} /></ModeBox>
            <Opacity>不透明度</Opacity>
            <LockRow><LockLabel>锁定：</LockLabel><Icon name="brush" size={12} /><Icon name="move" size={13} /><Icon name="checker" size={13} /></LockRow>
            <LayerList>
              <LayerRow><Icon name="eye" size={20} /><LayerThumb />背景</LayerRow>
            </LayerList>
          </LayersPanel>
        </RightDock>
      </Main>

      <Monitor>
        <svg width="44" height="18" viewBox="0 0 44 18">
          <path d="M22 0L29 3V10Q28 15 22 18Q16 15 15 10V3Z" fill="#f4401c" />
          <text x="19" y="13" fontSize="12" fontWeight="700" fill="#fff" fontFamily="Open Sans">1</text>
        </svg>
        <Percent>80<small>%</small></Percent>
        <Meter />
        <RateGroup>
          <Rate><svg width="8" height="18"><path d="M4 17V10M1 13L4 9L7 13" fill="none" stroke="#1ea0f0" strokeWidth="1.500" /></svg><RateText>0.0<small>K/s</small></RateText></Rate>
          <Rate><svg width="8" height="18"><path d="M4 7V15M1 12L4 16L7 12" fill="none" stroke="#14b85c" strokeWidth="1.500" /></svg><RateText>0.2<small>K/s</small></RateText></Rate>
        </RateGroup>
      </Monitor>

      <Arrows width="300" height="470">
        <path d="M235 126L108 62" stroke="#f00" strokeWidth="4" strokeLinecap="round" />
        <path d="M91 52L116 54L109 61L110 70Z" fill="#f00" />
        <path d="M249 380L186 436" stroke="#f00" strokeWidth="3" strokeLinecap="round" />
        <path d="M173 447L184 427L187 435L196 438Z" fill="#f00" />
      </Arrows>

      <ActivateNote>转到"设置"以激活 Windows。</ActivateNote>
      <Watermark>
        <SiteWords>
          <SiteName>电脑技术网</SiteName>
          <SiteUrl>www.tagxp.com</SiteUrl>
        </SiteWords>
        <Badge>
          TAG
          <GhostIcons>
            {['page', 'folder', 'up', 'chevron', 'duplicate'].map((n) => <Icon key={n} name={n} size={13} />)}
          </GhostIcons>
        </Badge>
        <ImeBar>
          <svg width="27" height="27" viewBox="0 0 27 27">
            <path d="M1 5L21 0Q26 12 26 22L5 27Q0 15 1 5Z" fill="#f5916f" />
            <path d="M21 7Q8 3 7 10Q8 14 14 14Q21 15 19 20Q13 24 5 20" fill="none" stroke="#fff" strokeWidth="3" />
          </svg>
          <span>英</span><span>，</span>
          <Icon name="mic" /><Icon name="keyboard" /><Icon name="grid" />
        </ImeBar>
      </Watermark>
    </Shell>
  );
}
